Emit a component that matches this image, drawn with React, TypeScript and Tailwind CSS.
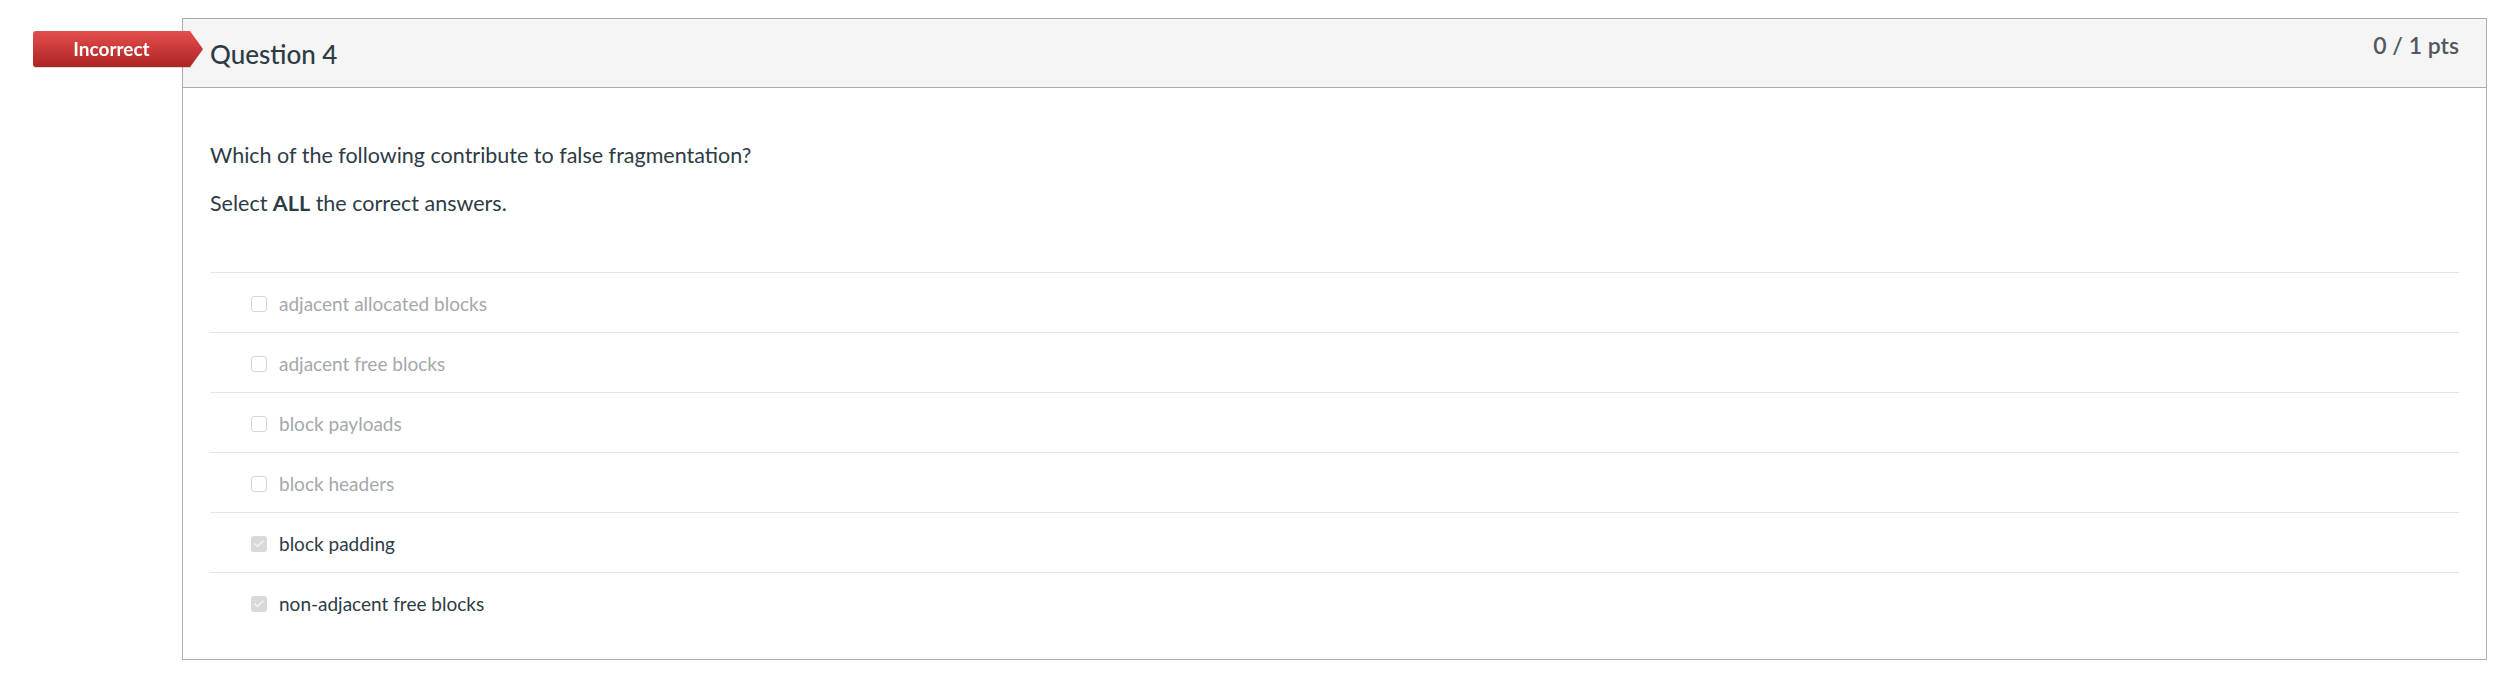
import { Check } from 'lucide-react';

const answers = [
  { label: 'adjacent allocated blocks', checked: false },
  { label: 'adjacent free blocks', checked: false },
  { label: 'block payloads', checked: false },
  { label: 'block headers', checked: false },
  { label: 'block padding', checked: true },
  { label: 'non-adjacent free blocks', checked: true },
];

function IncorrectBadge() {
  return (
    <div className="absolute left-[33px] top-[31px] flex h-[36px] drop-shadow-[0_1px_0_rgba(0,0,0,0.15)]">
      <div className="flex w-[157px] items-center justify-center rounded-l-[3px] bg-gradient-to-b from-[#e44e4e] to-[#ae2222] pb-[2px] text-[19px] font-bold leading-none text-white">
        Incorrect
      </div>
      <svg width="13" height="36" viewBox="0 0 13 36">
        <defs>
          <linearGradient id="arrowGrad" x1="0" y1="0" x2="0" y2="1">
            <stop offset="0%" stopColor="#e44e4e" />
            <stop offset="100%" stopColor="#ae2222" />
          </linearGradient>
        </defs>
        <polygon points="0,0 13,18 0,36" fill="url(#arrowGrad)" />
      </svg>
    </div>
  );
}

function AnswerRow({ label, checked }: { label: string; checked: boolean }) {
  return (
    <div className="flex h-[60px] items-center border-t border-[#e4e4e4] pl-[41px] pt-[3px]">
      {checked ? (
        <span className="flex h-[16px] w-[16px] items-center justify-center rounded-[3px] bg-[#d9d9d9]">
          <Check className="h-[12px] w-[12px] text-[#f4f4f4]" strokeWidth={3} />
        </span>
      ) : (
        <span className="h-[16px] w-[16px] rounded-[3px] border border-[#d6d6d6] bg-white" />
      )}
      <span className={`ml-[12px] text-[19px] leading-[26px] ${checked ? 'text-[#2d3b45]' : 'text-[#a3a8ac]'}`}>
        {label}
      </span>
    </div>
  );
}

export default function App() {
  return (
    <div className="relative min-h-[680px] bg-white pt-[18px] font-['Lato','Open_Sans',sans-serif] text-[#2d3b45]">
      <div className="ml-[182px] w-[2305px] border border-[#adadad]">
        {/* Header */}
        <div className="flex h-[69px] items-start justify-between border-b border-[#adadad] bg-[#f5f5f5] px-[27px]">
          <h2 className="pt-[22px] text-[26px] font-medium leading-none">Question 4</h2>
          <div className="pt-[15px] text-[23px] font-semibold leading-none text-[#52585d]">0 / 1 pts</div>
        </div>

        {/* Body */}
        <div className="px-[27px] pb-[27px] pt-[52px]">
          <p className="mb-[18px] text-[21.5px] leading-[30px]">Which of the following contribute to false fragmentation?</p>
          <p className="text-[21.5px] leading-[30px]">
            Select <strong className="font-bold">ALL</strong> the correct answers.
          </p>

          <div className="mt-[54px]">
            {answers.map((a) => (
              <AnswerRow key={a.label} label={a.label} checked={a.checked} />
            ))}
          </div>
        </div>
      </div>

      <IncorrectBadge />
    </div>
  );
}
